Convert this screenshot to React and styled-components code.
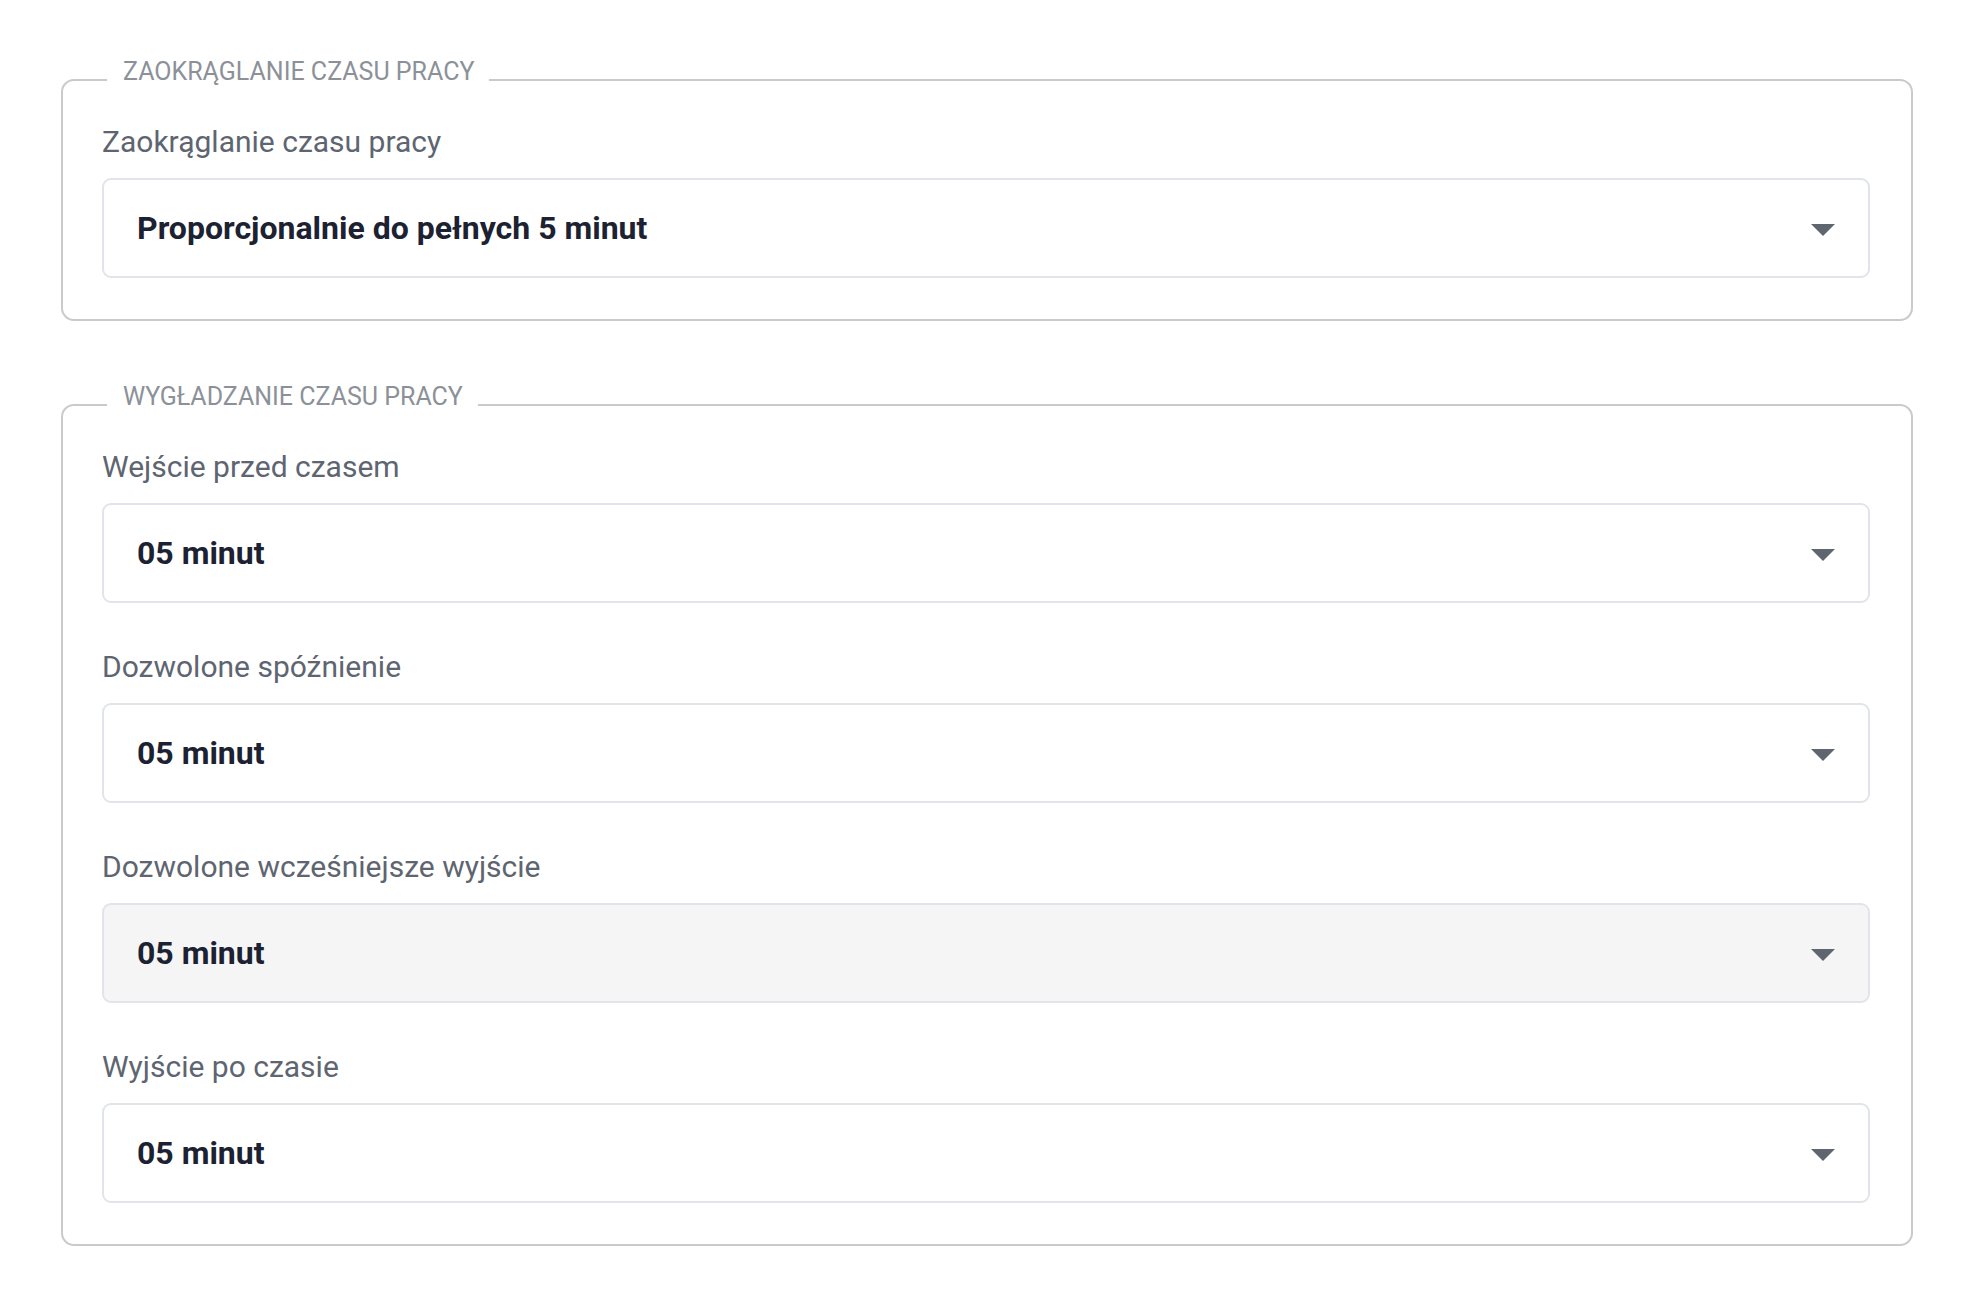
import React from "react";
import styled, { createGlobalStyle } from "styled-components";

const GlobalStyle = createGlobalStyle`
  body {
    margin: 0;
    background: #ffffff;
    font-family: Roboto, "Liberation Sans", Arial, sans-serif;
  }
`;

const Page = styled.div`
  padding: 57px 58px 40px 61px;
`;

const Group = styled.fieldset`
  margin: 0 0 61px;
  padding: 0;
  border: 2px solid #cacaca;
  border-radius: 13px;
  min-width: 0;

  &:last-child {
    margin-bottom: 0;
  }
`;

const Legend = styled.legend`
  margin-left: 44px;
  padding: 2px 15px 19px 16px;
  font-size: 25px;
  line-height: 25px;
  color: #8c9199;
  text-transform: uppercase;
`;

const Body = styled.div`
  padding: 21px 41px 41px 39px;
`;

const Field = styled.div`
  & + & {
    margin-top: 46px;
  }
`;

const Label = styled.div`
  font-size: 30px;
  line-height: 36px;
  color: #5e6571;
  margin-bottom: 18px;
`;

const Select = styled.div`
  box-sizing: border-box;
  height: 100px;
  display: flex;
  align-items: center;
  justify-content: space-between;
  padding: 0 33px;
  border: 2px solid #e1e4e9;
  border-radius: 9px;
  background: ${(p) => (p.disabled ? "#f5f5f5" : "#ffffff")};
  cursor: ${(p) => (p.disabled ? "default" : "pointer")};
`;

const Value = styled.span`
  font-size: 32px;
  font-weight: 700;
  color: #1c2231;
`;

const Arrow = styled.svg`
  flex: none;
  margin-top: 4px;
`;

const Caret = () => (
  <Arrow width="24" height="12" viewBox="0 0 24 12">
    <polygon points="0,0 24,0 12,12" fill="#5f6670" />
  </Arrow>
);

const groups = [
  {
    title: "Zaokrąglanie czasu pracy",
    fields: [
      { label: "Zaokrąglanie czasu pracy", value: "Proporcjonalnie do pełnych 5 minut" }
    ]
  },
  {
    title: "Wygładzanie czasu pracy",
    fields: [
      { label: "Wejście przed czasem", value: "05 minut" },
      { label: "Dozwolone spóźnienie", value: "05 minut" },
      { label: "Dozwolone wcześniejsze wyjście", value: "05 minut", disabled: true },
      { label: "Wyjście po czasie", value: "05 minut" }
    ]
  }
];

const App = () => {
  return (
    <Page>
      <GlobalStyle />
      {groups.map((group) => (
        <Group key={group.title}>
          <Legend>{group.title}</Legend>
          <Body>
            {group.fields.map((field) => (
              <Field key={field.label}>
                <Label>{field.label}</Label>
                <Select disabled={field.disabled}>
                  <Value>{field.value}</Value>
                  <Caret />
                </Select>
              </Field>
            ))}
          </Body>
        </Group>
      ))}
    </Page>
  );
};

export default App;
